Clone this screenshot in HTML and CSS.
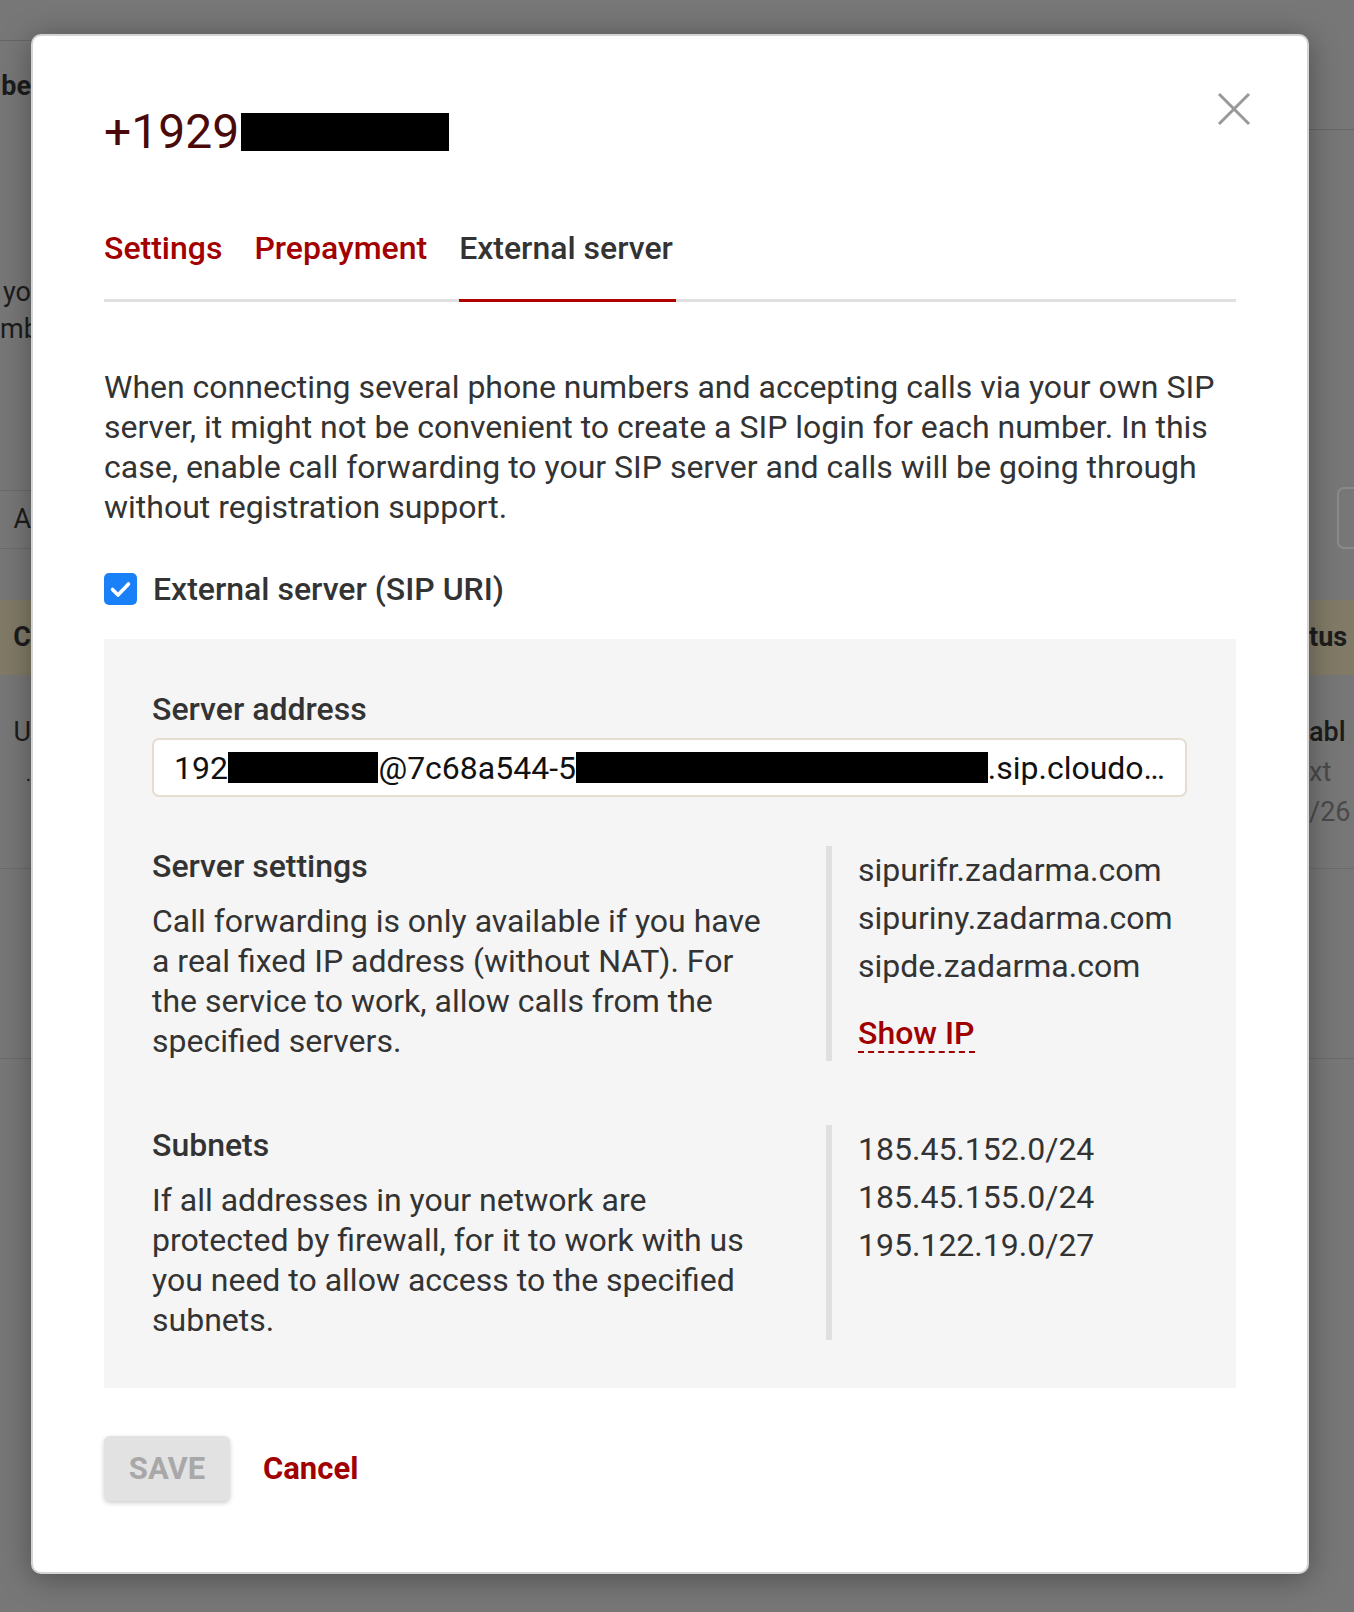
FILE: index.html
```html
<!DOCTYPE html>
<html lang="en">
<head>
  <meta charset="UTF-8" />
  <meta name="viewport" content="width=device-width, initial-scale=1.0" />
  <title>Number settings</title>
  <link rel="stylesheet" href="styles.css">
</head>
<body>
<div class="page">
  <div class="page-side page-left">
    <div class="bg-top"></div>
    <div class="bg-head">be</div>
    <div class="bg-note">yo<br>mb</div>
    <div class="bg-cell">A</div>
    <div class="bg-gap"></div>
    <div class="bg-band">C</div>
    <div class="bg-row">U<br><small>.</small></div>
    <div class="bg-row bg-empty"></div>
  </div>
  <div class="page-side page-right">
    <div class="bg-top-r"></div>
    <div class="bg-search"><div class="bg-input"></div></div>
    <div class="bg-band">tus</div>
    <div class="bg-row"><b>abl</b><br><span class="muted">xt</span><br><span class="muted">/26</span></div>
    <div class="bg-row bg-empty"></div>
  </div>
</div>

<div class="modal">
  <div class="modal-head">
    <h1 class="title">+1929<span class="redact"></span></h1>
    <button type="button" class="close" aria-label="Close">
      <svg width="34" height="34" viewBox="0 0 34 34"><path d="M2 2L32 32M32 2L2 32" stroke="#999" stroke-width="3" fill="none"/></svg>
    </button>
  </div>

  <div class="tabs">
    <div class="tab">Settings</div>
    <div class="tab">Prepayment</div>
    <div class="tab active">External server</div>
  </div>

  <p class="intro">When connecting several phone numbers and accepting calls via your own SIP server, it might not be convenient to create a SIP login for each number. In this case, enable call forwarding to your SIP server and calls will be going through without registration support.</p>

  <label class="check-row">
    <span class="checkbox">
      <svg width="33" height="32" viewBox="0 0 33 32"><path d="M8.5 16.5l5.5 5.5 10.5-11" stroke="#fff" stroke-width="3.6" fill="none" stroke-linecap="round" stroke-linejoin="round"/></svg>
    </span>
    External server (SIP URI)
  </label>

  <div class="panel">
    <div class="field-label">Server address</div>
    <div class="address">192<span class="redact r1"></span>@7c68a544-5<span class="redact r2"></span>.sip.cloudo…</div>

    <div class="info-row">
      <div class="info-text">
        <h3>Server settings</h3>
        <p>Call forwarding is only available if you have a real fixed IP address (without NAT). For the service to work, allow calls from the specified servers.</p>
      </div>
      <div class="info-list">
        <div>sipurifr.zadarma.com</div>
        <div>sipuriny.zadarma.com</div>
        <div>sipde.zadarma.com</div>
        <a class="show-ip">Show IP</a>
      </div>
    </div>

    <div class="info-row second">
      <div class="info-text">
        <h3>Subnets</h3>
        <p>If all addresses in your network are protected by firewall, for it to work with us you need to allow access to the specified subnets.</p>
      </div>
      <div class="info-list">
        <div>185.45.152.0/24</div>
        <div>185.45.155.0/24</div>
        <div>195.122.19.0/27</div>
      </div>
    </div>
  </div>

  <div class="actions">
    <button type="button" class="btn-save">SAVE</button>
    <button type="button" class="btn-cancel">Cancel</button>
  </div>
</div>
</body>
</html>
```

FILE: styles.css
```css
html, body {
  margin: 0; padding: 0;
  width: 1354px; height: 1612px;
  overflow: hidden;
  font-family: Roboto, 'Liberation Sans', sans-serif;
  background: #777;
  color: #333;
}

/* dimmed page behind the dialog */
.page {
  display: flex;
  justify-content: space-between;
  height: 1612px;
}
.page-side {
  display: flex;
  flex-direction: column;
  color: #1c1c1c;
  font-size: 27px;
  white-space: nowrap;
}
.page-left {
  width: 31px;
  text-align: right;
}
.page-right {
  width: 45px;
}
.bg-top {
  height: 40px;
  border-bottom: 1px solid #666;
}
.bg-head {
  height: 90px;
  line-height: 90px;
  font-weight: 700;
}
.bg-note {
  height: 216px;
  padding-top: 143px;
  line-height: 37px;
  border-bottom: 1px solid #6a6a6a;
}
.bg-cell {
  height: 57px;
  line-height: 57px;
  border-bottom: 1px solid #6a6a6a;
}
.bg-gap {
  height: 51px;
}
.bg-band {
  height: 75px;
  line-height: 75px;
  background: #807a67;
  font-weight: 700;
}
.bg-row {
  height: 194px;
  box-sizing: border-box;
  padding-top: 37px;
  line-height: 40px;
  border-bottom: 1px solid #6a6a6a;
}
.bg-row small {
  font-size: 20px;
}
.bg-row b {
  font-weight: 500;
}
.bg-row .muted {
  color: #4a4a4a;
}
.bg-empty {
  height: 190px;
}
.bg-top-r {
  height: 129px;
  border-bottom: 1px solid #666;
}
.bg-search {
  height: 470px;
  box-sizing: border-box;
  padding: 357px 0 0 28px;
}
.bg-input {
  height: 62px;
  box-sizing: border-box;
  border: 2px solid #8a8a8a;
  border-right: 0;
  border-radius: 7px 0 0 7px;
}

/* dialog */
.modal {
  position: absolute;
  left: 31px;
  top: 34px;
  width: 1278px;
  height: 1540px;
  box-sizing: border-box;
  background: #fff;
  border: 2px solid #d4d4d4;
  border-radius: 10px;
  box-shadow: 0 4px 30px rgba(0,0,0,0.35);
  padding: 68px 71px 70px;
}
.modal-head {
  display: flex;
  justify-content: space-between;
  align-items: flex-start;
}
.title {
  margin: 0;
  display: flex;
  align-items: center;
  font-size: 48px;
  line-height: 56px;
  font-weight: 400;
  color: #4b0a0a;
}
.redact {
  display: inline-block;
  background: #000;
}
.title .redact {
  width: 208px;
  height: 38px;
  margin-left: 2px;
}
.close {
  width: 34px;
  height: 34px;
  margin: -12px -15px 0 0;
  padding: 0;
  border: 0;
  background: none;
  cursor: pointer;
}
.close svg {
  display: block;
}

.tabs {
  display: flex;
  gap: 32px;
  margin-top: 68px;
  border-bottom: 3px solid #e0e0e0;
}
.tab {
  font-size: 32px;
  font-weight: 500;
  line-height: 40px;
  padding-bottom: 31px;
  margin-bottom: -3px;
  color: #a30000;
  border-bottom: 3px solid transparent;
}
.tab.active {
  color: #333;
  border-bottom-color: #b00000;
  padding-right: 3px;
}

.intro {
  margin: 65px 0 0;
  font-size: 32px;
  line-height: 40px;
  color: #333;
}

.check-row {
  display: flex;
  align-items: center;
  gap: 16px;
  margin-top: 42px;
  height: 40px;
  font-size: 32px;
  font-weight: 500;
  color: #333;
}
.checkbox {
  width: 33px;
  height: 32px;
  border-radius: 5px;
  background: #1a80f8;
}
.checkbox svg {
  display: block;
}

.panel {
  margin-top: 30px;
  background: #f5f5f5;
  padding: 50px 49px 48px 48px;
}
.field-label {
  font-size: 32px;
  font-weight: 500;
  line-height: 40px;
  color: #333;
}
.address {
  margin-top: 9px;
  height: 59px;
  box-sizing: border-box;
  display: flex;
  align-items: center;
  padding: 0 20px;
  background: #fff;
  border: 2px solid #e5ddd1;
  border-radius: 7px;
  font-size: 32px;
  color: #111;
  white-space: nowrap;
  overflow: hidden;
}
.address .redact {
  height: 31px;
}
.address .r1 { width: 152px; }
.address .r2 { width: 416px; }

.info-row {
  display: flex;
  margin-top: 49px;
}
.info-row.second {
  margin-top: 64px;
}
.info-text {
  width: 615px;
  margin-right: 59px;
}
.info-text h3 {
  margin: 0;
  font-size: 32px;
  font-weight: 500;
  line-height: 40px;
  color: #333;
}
.info-text p {
  margin: 15px 0 0;
  font-size: 32px;
  line-height: 40px;
  color: #333;
}
.info-list {
  flex: 1;
  border-left: 6px solid #e0e0e0;
  padding-left: 26px;
  font-size: 32px;
  line-height: 48px;
  color: #333;
}
.show-ip {
  display: block;
  width: fit-content;
  margin-top: 25px;
  font-size: 32px;
  font-weight: 500;
  line-height: 36px;
  color: #a00000;
  border-bottom: 2px dashed #a00000;
  cursor: pointer;
}

.actions {
  display: flex;
  align-items: center;
  gap: 33px;
  margin-top: 48px;
}
.btn-save {
  width: 126px;
  height: 65px;
  border: 0;
  border-radius: 6px;
  background: #e2e2e2;
  color: #a8a8a8;
  font-family: inherit;
  font-size: 31px;
  font-weight: 700;
  box-shadow: 0 2px 5px rgba(0,0,0,0.2);
}
.btn-cancel {
  padding: 0;
  border: 0;
  background: none;
  color: #a00000;
  font-family: inherit;
  font-size: 31px;
  font-weight: 700;
  cursor: pointer;
}
```
